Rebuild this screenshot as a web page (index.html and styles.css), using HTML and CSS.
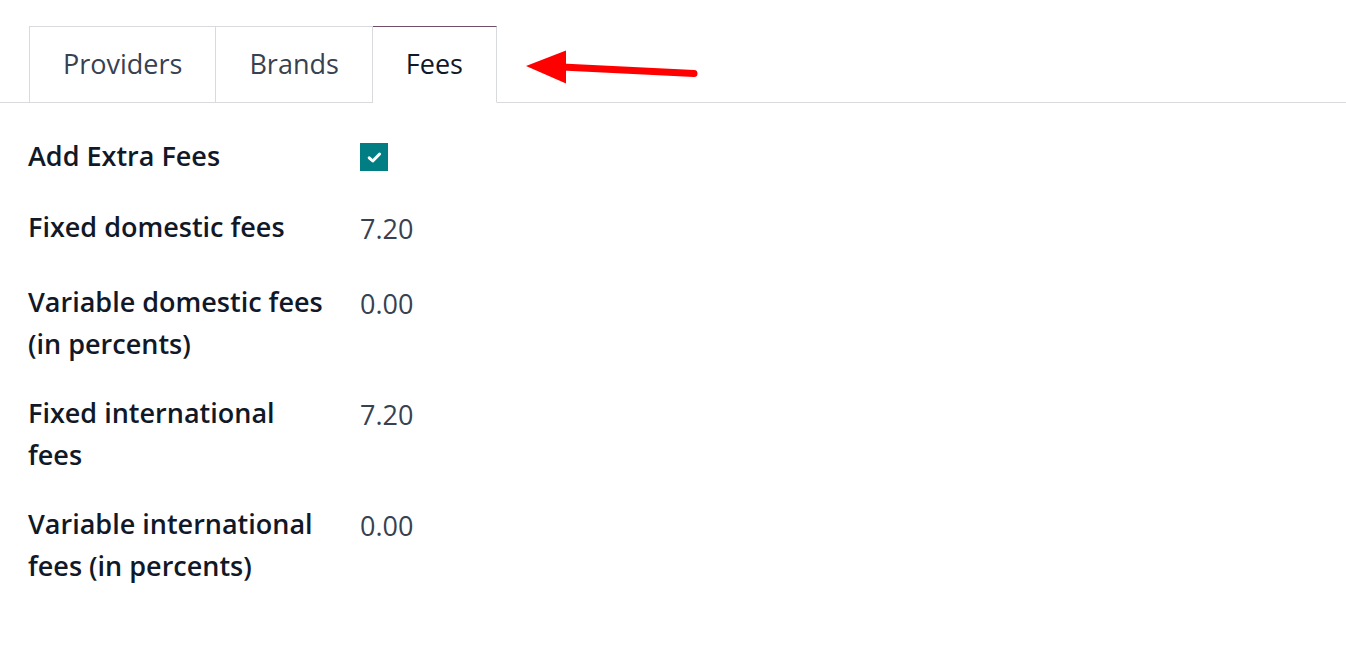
FILE: index.html
```html
<!DOCTYPE html>
<html>
<head>
<meta charset="utf-8">
<link rel="stylesheet" href="styles.css">
</head>
<body>
<div class="page">
  <ul class="tabs">
    <li class="tab">Providers</li>
    <li class="tab">Brands</li>
    <li class="tab active">Fees</li>
  </ul>
  <svg class="arrow" width="200" height="50" viewBox="520 45 200 50">
    <line x1="562" y1="67" x2="694" y2="73.5" stroke="#ff0000" stroke-width="7" stroke-linecap="round"/>
    <polygon points="526,66 566,50.5 566,83.5" fill="#ff0000"/>
  </svg>
  <div class="form">
    <div class="row row-check">
      <div class="label">Add Extra Fees</div>
      <div class="value"><span class="checkbox"><svg width="15" height="13" viewBox="0 0 15 13"><path d="M2.2 6.8 L5.8 10 L12.6 3" fill="none" stroke="#fff" stroke-width="3" stroke-linecap="round" stroke-linejoin="round"/></svg></span></div>
    </div>
    <div class="row">
      <div class="label">Fixed domestic fees</div>
      <div class="value num">7.20</div>
    </div>
    <div class="row">
      <div class="label">Variable domestic fees (in percents)</div>
      <div class="value num">0.00</div>
    </div>
    <div class="row">
      <div class="label">Fixed international fees</div>
      <div class="value num">7.20</div>
    </div>
    <div class="row">
      <div class="label">Variable international fees (in percents)</div>
      <div class="value num">0.00</div>
    </div>
  </div>
</div>
</body>
</html>
```

FILE: styles.css
```css
* { box-sizing: border-box; }
html, body {
  margin: 0;
  padding: 0;
  background: #ffffff;
}
body {
  font-family: "Open Sans", "Noto Sans", sans-serif;
  font-size: 27px;
  line-height: 42px;
  color: #111827;
}
.page {
  position: relative;
  width: 1346px;
  height: 660px;
  overflow: hidden;
  padding-top: 26px;
}
.tabs {
  list-style: none;
  margin: 0;
  padding: 0 0 0 29px;
  display: flex;
  border-bottom: 1px solid #d8dadd;
}
.tab {
  padding: 16px 33px 17px;
  border: 1px solid #d8dadd;
  margin-bottom: -1px;
  color: #374151;
  background: #fff;
}
.tab + .tab { border-left: none; }
.tab.active {
  color: #111827;
  border-top: 1px solid #714b67;
  border-bottom-color: #ffffff;
}
.arrow {
  position: absolute;
  left: 520px;
  top: 45px;
}
.form {
  padding: 32px 0 0 28px;
}
.row {
  display: flex;
  align-items: flex-start;
  margin-bottom: 27px;
}
.row-check { min-height: 44px; }
.label {
  width: 332px;
  padding-right: 30px;
  font-weight: 600;
  color: #111827;
}
.value {
  color: #374151;
  min-height: 48px;
}
.row-check .value { min-height: 44px; padding-top: 8px; }
.checkbox {
  display: flex;
  align-items: center;
  justify-content: center;
  width: 28px;
  height: 28px;
  background: #017e84;
}
.num { padding-top: 2px; }
```
